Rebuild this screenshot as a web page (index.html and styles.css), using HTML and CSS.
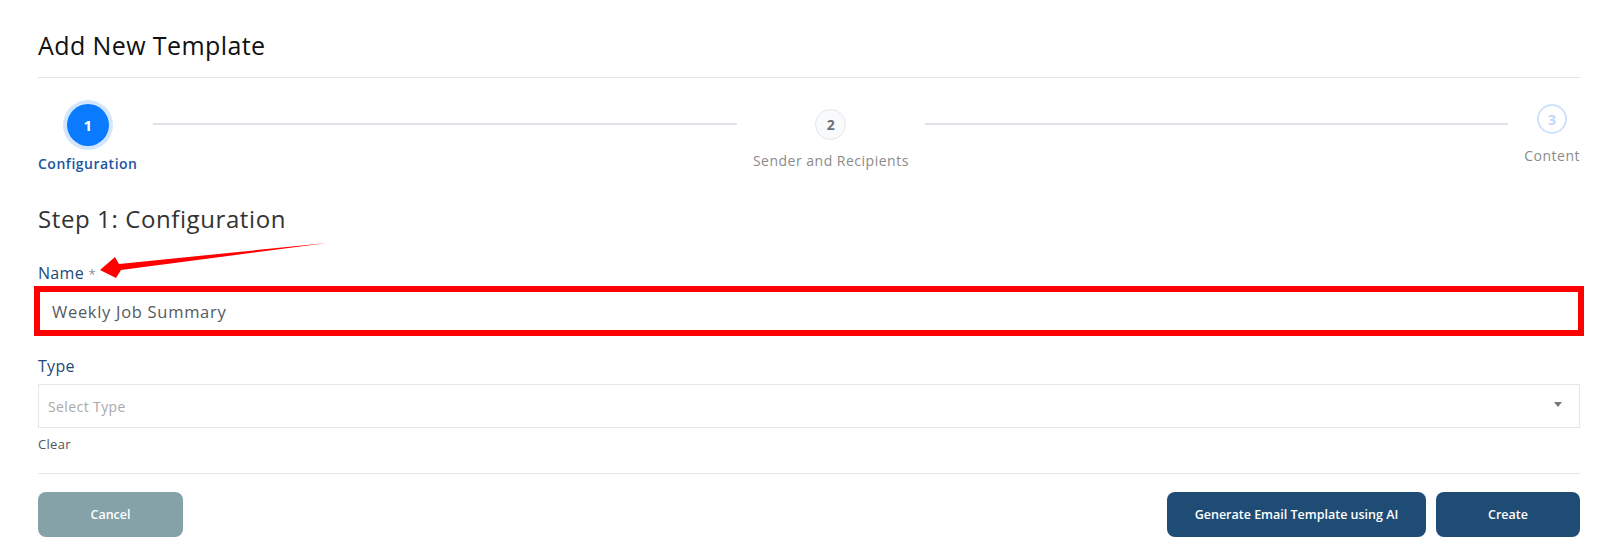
FILE: index.html
```html
<!DOCTYPE html>
<html lang="en">
<head>
<meta charset="utf-8">
<title>Add New Template</title>
<link rel="stylesheet" href="styles.css">
</head>
<body>
<div class="modal">
  <h1 class="modal-title">Add New Template</h1>
  <div class="divider"></div>

  <div class="stepper">
    <div class="step step-active">
      <div class="step-circle">1</div>
      <div class="step-label">Configuration</div>
    </div>
    <div class="step-line"></div>
    <div class="step step-pending">
      <div class="step-circle">2</div>
      <div class="step-label">Sender and Recipients</div>
    </div>
    <div class="step-line"></div>
    <div class="step step-upcoming">
      <div class="step-circle">3</div>
      <div class="step-label">Content</div>
    </div>
  </div>

  <h2 class="step-title">Step 1: Configuration</h2>

  <div class="field field-name">
    <label class="field-label">Name <span class="req">*</span></label>
    <div class="input input-highlight">Weekly Job Summary</div>
  </div>

  <div class="field field-type">
    <label class="field-label">Type</label>
    <div class="select">
      <span class="placeholder">Select Type</span>
      <span class="caret"></span>
    </div>
    <div class="clear-link">Clear</div>
  </div>

  <div class="divider divider-footer"></div>

  <div class="footer">
    <button class="btn btn-cancel">Cancel</button>
    <div class="footer-right">
      <button class="btn btn-primary btn-ai">Generate Email Template using AI</button>
      <button class="btn btn-primary btn-create">Create</button>
    </div>
  </div>
</div>

<svg class="annotation" width="1600" height="557" viewBox="0 0 1600 557">
  <polygon points="100,270 115,257 119,264 327,243 121,270 116,278" fill="#ff0000"/>
</svg>
</body>
</html>
```

FILE: styles.css
```css
* { box-sizing: border-box; }

html, body {
  margin: 0;
  padding: 0;
  background: #ffffff;
}

body {
  font-family: "Open Sans", "Noto Sans", sans-serif;
  width: 1600px;
  height: 557px;
  overflow: hidden;
  position: relative;
}

.modal {
  padding: 30px 20px 0 38px;
}

.modal-title {
  margin: 0;
  font-size: 25px;
  line-height: 30px;
  font-weight: 400;
  letter-spacing: 0.4px;
  color: #111111;
}

.divider {
  height: 1px;
  background: #e2e4e8;
  margin-top: 17px;
}

/* Stepper */
.stepper {
  display: flex;
  align-items: flex-start;
  margin-top: 22px;
}

.step {
  display: flex;
  flex-direction: column;
  align-items: center;
}

.step-circle {
  border-radius: 50%;
  display: flex;
  align-items: center;
  justify-content: center;
  font-weight: 700;
}

.step-label {
  font-size: 14px;
  line-height: 20px;
  letter-spacing: 0.5px;
  white-space: nowrap;
}

.step-active .step-circle {
  width: 42px;
  height: 42px;
  margin: 4px;
  background: #0a7bff;
  color: #ffffff;
  font-size: 15px;
  box-shadow: 0 0 0 4px #d3e6fb;
}
.step-active .step-label {
  margin-top: 4px;
  color: #1b55a3;
  font-weight: 600;
}

.step-pending {
  margin-top: 9px;
}
.step-pending .step-circle {
  width: 31px;
  height: 31px;
  border: 1px solid #e4e6ea;
  background: #f9fafb;
  color: #6d6f73;
  font-size: 14px;
}
.step-pending .step-label {
  margin-top: 11px;
  color: #8b8b8b;
}

.step-upcoming {
  margin-top: 4px;
}
.step-upcoming .step-circle {
  width: 30px;
  height: 30px;
  border: 2px solid #cfe3fb;
  background: #ffffff;
  color: #bcd8fa;
  font-size: 14px;
}
.step-upcoming .step-label {
  margin-top: 12px;
  color: #8b8b8b;
}

.step-line {
  flex: 1;
  height: 2px;
  background: #dfe2e6;
  margin: 23px 16px 0;
}

/* Form */
.step-title {
  margin: 30px 0 0;
  font-size: 24px;
  line-height: 30px;
  font-weight: 400;
  letter-spacing: 0.6px;
  color: #333333;
}

.field-label {
  display: block;
  font-size: 16px;
  line-height: 20px;
  font-weight: 500;
  letter-spacing: 0.3px;
  color: #1d4a78;
}

.req {
  color: #8a8f96;
  font-size: 13px;
}

.field-name {
  margin-top: 29px;
}
.field-name .field-label {
  margin-bottom: 2px;
}

.input {
  height: 50px;
  margin-left: -4px;
  margin-right: -4px;
  display: flex;
  align-items: center;
  padding: 0 12px;
  font-size: 16.5px;
  letter-spacing: 0.7px;
  color: #555a60;
  background: #ffffff;
}

.input-highlight {
  border: 6px solid #ff0000;
}

.field-type {
  margin-top: 20px;
}
.field-type .field-label {
  margin-bottom: 8px;
}

.select {
  height: 44px;
  border: 1px solid #e6e6e6;
  display: flex;
  align-items: center;
  justify-content: space-between;
  padding: 0 17px 0 9px;
}

.placeholder {
  font-size: 14px;
  letter-spacing: 0.4px;
  color: #aaaaaa;
}

.caret {
  width: 0;
  height: 0;
  border-left: 4px solid transparent;
  border-right: 4px solid transparent;
  border-top: 5px solid #777777;
  margin-top: -4px;
}

.clear-link {
  margin-top: 8px;
  font-size: 13px;
  line-height: 16px;
  letter-spacing: 0.3px;
  color: #555555;
}

.divider-footer {
  margin-top: 21px;
  background: #e6e6e6;
}

.footer {
  display: flex;
  justify-content: space-between;
  margin-top: 18px;
}

.footer-right {
  display: flex;
  gap: 10px;
}

.btn {
  height: 45px;
  border: none;
  border-radius: 8px;
  color: #ffffff;
  font-family: inherit;
  font-size: 12.5px;
  font-weight: 600;
  cursor: pointer;
}

.btn-cancel {
  width: 145px;
  background: #84a2a8;
}

.btn-primary {
  background: #1f4c75;
}

.btn-ai {
  width: 259px;
}

.btn-create {
  width: 144px;
}

.annotation {
  position: absolute;
  top: 0;
  left: 0;
  pointer-events: none;
}
```
